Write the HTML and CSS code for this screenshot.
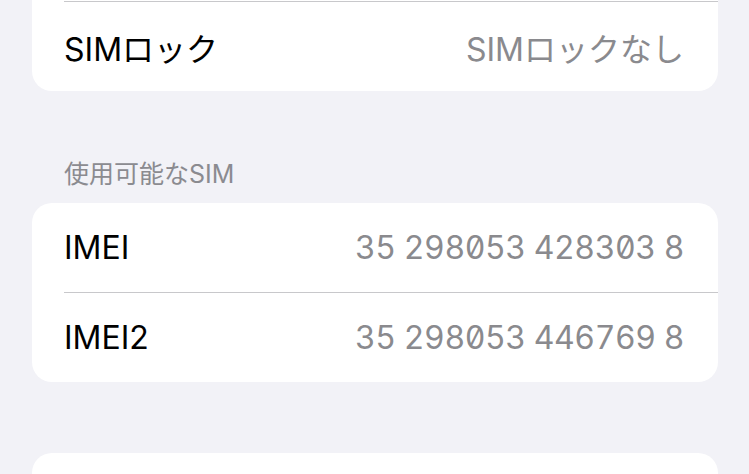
FILE: index.html
```html
<!DOCTYPE html>
<html>
    <head>
        <meta charset="utf-8">
        <title>情報</title>
        <link rel="stylesheet" href="styles.css">
    </head>
    <body>
        <div class="group group-cont">
            <div class="row divided">
                <span class="label">SIMロック</span>
                <span class="value">SIMロックなし</span>
            </div>
        </div>

        <div class="section-header">使用可能なSIM</div>
        <div class="group">
            <div class="row">
                <span class="label">IMEI</span>
                <span class="value num">35 298053 428303 8</span>
            </div>
            <div class="row">
                <span class="label">IMEI2</span>
                <span class="value num">35 298053 446769 8</span>
            </div>
        </div>

        <div class="group group-next"></div>
    </body>
</html>
```

FILE: styles.css
```css
html,
body {
    margin: 0;
    padding: 0;
    height: 100%;
    overflow: hidden;
}

body {
    background: #f2f2f7;
    font-family: Inter, "Noto Sans CJK JP", sans-serif;
    color: #000;
}

/* inset grouped list */
.group {
    background: #fff;
    margin: 0 31px 0 32px;
    border-radius: 20px;
}

/* list scrolled up: top edge is off screen */
.group-cont {
    border-top-left-radius: 0;
    border-top-right-radius: 0;
    padding-top: 1px;
}

.group-next {
    margin-top: 71px;
    height: 120px;
}

.row {
    display: flex;
    align-items: center;
    justify-content: space-between;
    height: 89px;
    margin-left: 32px;
    padding-right: 34px;
}

.row + .row,
.row.divided {
    border-top: 1px solid #c8c8cb;
}

.label {
    font-size: 32px;
}

.value {
    font-size: 32px;
    color: #8a8a8e;
}

/* IMEI digits: fixed width, slashed zero */
.value.num {
    font-feature-settings: "tnum" 1, "zero" 1;
    letter-spacing: -0.45px;
}

.section-header {
    margin: 0 64px;
    padding: 68px 0 14px 0;
    line-height: 30px;
    font-size: 25px;
    color: #8b8b90;
}
```
